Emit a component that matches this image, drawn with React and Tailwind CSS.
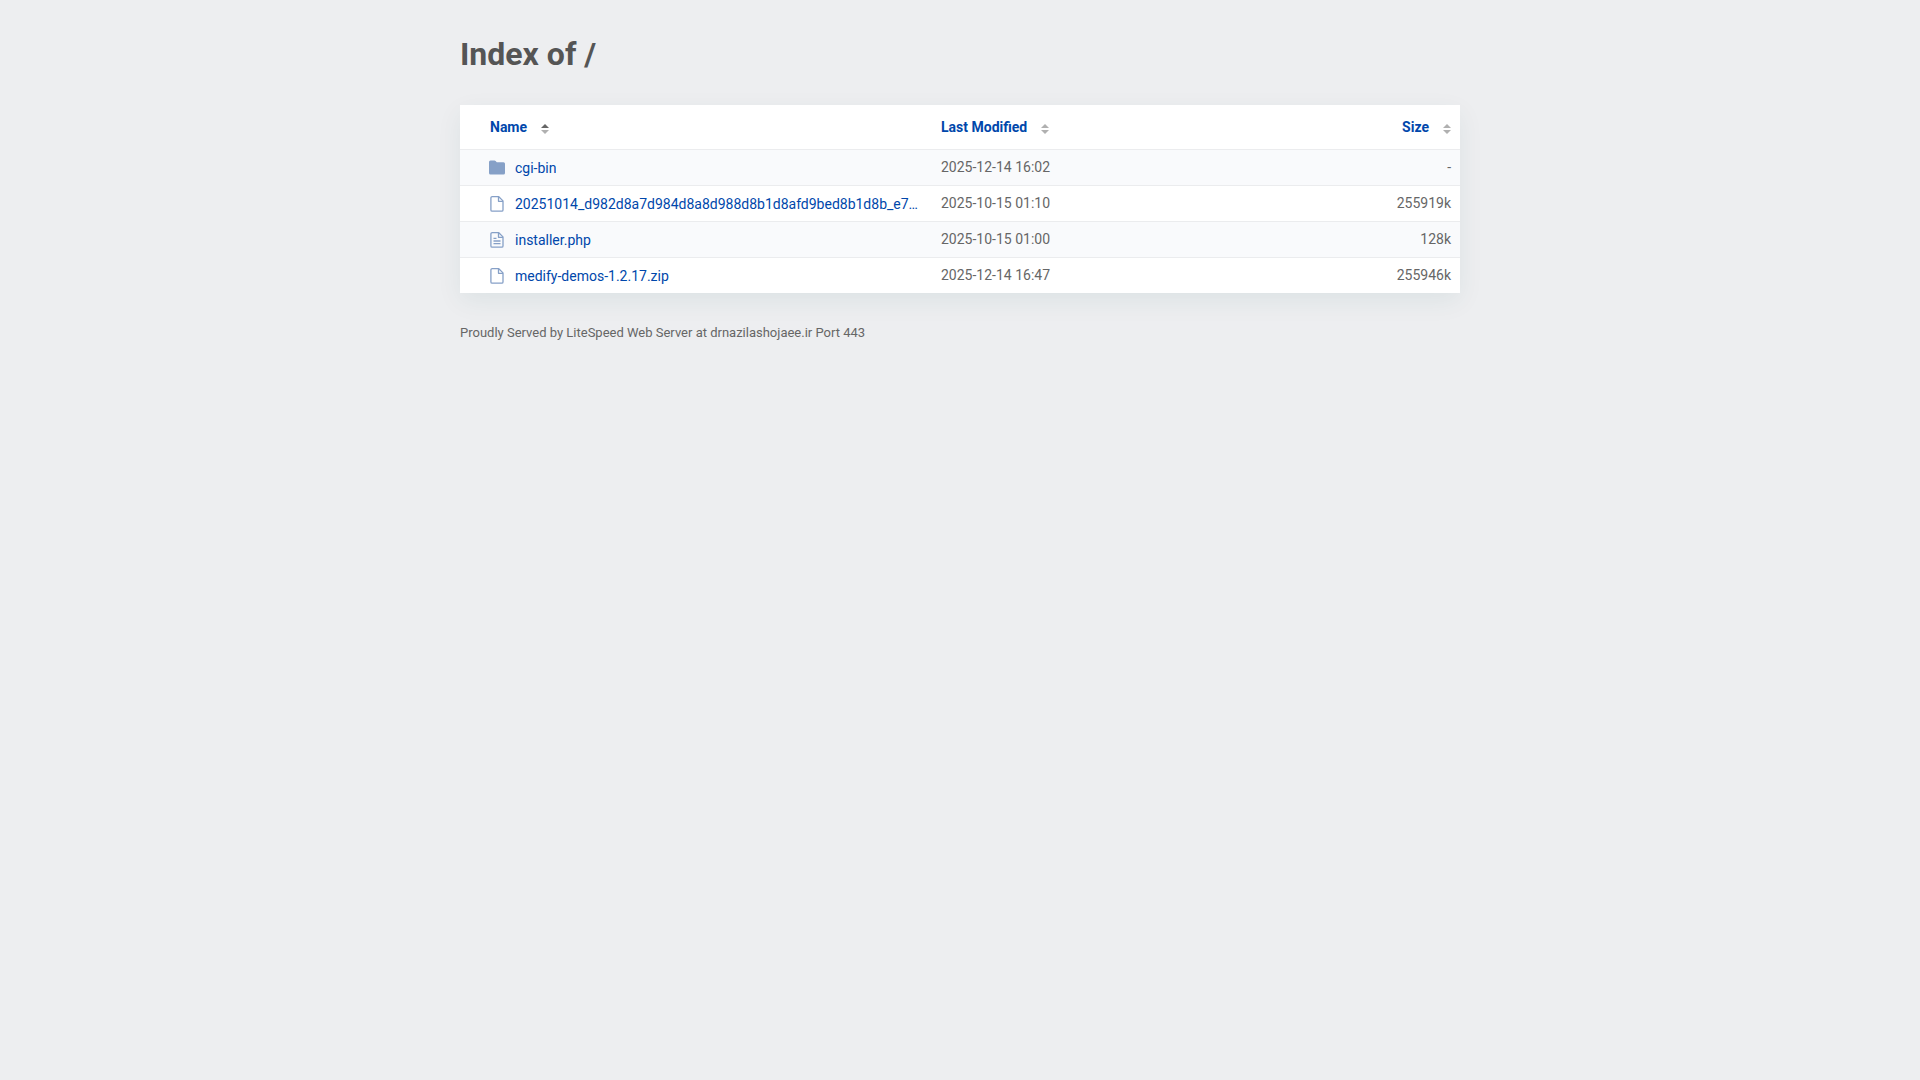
import React from "react";

const files = [
  { name: "cgi-bin", type: "folder", modified: "2025-12-14 16:02", size: "-" },
  {
    name: "20251014_d982d8a7d984d8a8d988d8b1d8afd9bed8b1d8b_e7…",
    type: "file",
    modified: "2025-10-15 01:10",
    size: "255919k",
  },
  { name: "installer.php", type: "text", modified: "2025-10-15 01:00", size: "128k" },
  { name: "medify-demos-1.2.17.zip", type: "file", modified: "2025-12-14 16:47", size: "255946k" },
];

const FileIcon = ({ type }) => {
  if (type === "folder") {
    return (
      <svg className="size-4 shrink-0 text-[#86a0c7]" viewBox="0 0 16 16" fill="currentColor" aria-hidden="true">
        <path d="M1.500.500h4c.5 0 .8.2 1.100.5L7.800 2.300H14.500A1.500 1.500 0 0 1 16 3.800v9.200a1.500 1.500 0 0 1-1.500 1.500h-13A1.500 1.500 0 0 1 0 13V2A1.500 1.500 0 0 1 1.500.500z" />
      </svg>
    );
  }

  return (
    <svg
      className="size-4 shrink-0 text-[#86a0c7]"
      viewBox="0 0 16 16"
      fill="none"
      stroke="currentColor"
      strokeWidth="1.3"
      strokeLinejoin="round"
      aria-hidden="true"
    >
      <path d="M3.200.700h6.600L14 4.900v9a1.300 1.300 0 0 1-1.300 1.300H3.200a1.300 1.300 0 0 1-1.300-1.300V2A1.300 1.300 0 0 1 3.200.700z" />
      <path d="M9.500 1v4.300H14" />
      {type === "text" && <path d="M4.500 6.300h3M4.500 9h7M4.500 11.600h7" />}
    </svg>
  );
};

const SortIcon = ({ active }) => (
  <svg className="mt-1 h-2.5 w-2" viewBox="0 0 8 10" aria-hidden="true">
    <path d="M0 4 4 0l4 4z" fill={active ? "#666666" : "#b0b0b0"} />
    <path d="M0 6h8l-4 4z" fill="#b0b0b0" />
  </svg>
);

const HeaderCell = ({ label, sort, className }) => (
  <th scope="col" aria-sort={sort} className={`h-11 p-0 ${className}`}>
    <button type="button" className="inline-flex cursor-pointer items-center gap-3.5 align-middle font-bold text-[#0047ab]">
      {label}
      <SortIcon active={sort === "ascending"} />
    </button>
  </th>
);

export default function App() {
  return (
    <div className="min-h-screen bg-[#edeef0] px-5 pt-8 font-[Roboto,sans-serif] text-sm text-[#666666]">
      <main className="mx-auto max-w-[1000px]">
        <h1 className="mb-7 text-[32px] leading-[45px] font-bold text-[#555555]">Index of /</h1>

        <table className="w-full table-fixed border-collapse bg-white text-left shadow-[0_8px_24px_rgba(0,80,80,0.07)]">
          <colgroup>
            <col className="w-[47%]" />
            <col />
            <col className="w-[15%]" />
          </colgroup>
          <thead>
            <tr>
              <HeaderCell label="Name" sort="ascending" className="pl-[30px]" />
              <HeaderCell label="Last Modified" sort="none" className="pl-[11px]" />
              <HeaderCell label="Size" sort="none" className="pr-[9px] text-right" />
            </tr>
          </thead>
          <tbody>
            {files.map((file) => (
              <tr key={file.name} className="h-9 border-t border-[#ebecee] odd:bg-[#f9fafc]">
                <td className="p-0 pt-0.5 pl-[29px]">
                  <a href="#" className="flex items-center gap-2.5 text-[#0047ab]">
                    <FileIcon type={file.type} />
                    <span className="truncate">{file.name}</span>
                  </a>
                </td>
                <td className="p-0 pl-[11px]">{file.modified}</td>
                <td className="p-0 pr-[9px] text-right">{file.size}</td>
              </tr>
            ))}
          </tbody>
        </table>

        <footer className="mt-8 text-[13px] leading-4">
          Proudly Served by LiteSpeed Web Server at drnazilashojaee.ir Port 443
        </footer>
      </main>
    </div>
  );
}
